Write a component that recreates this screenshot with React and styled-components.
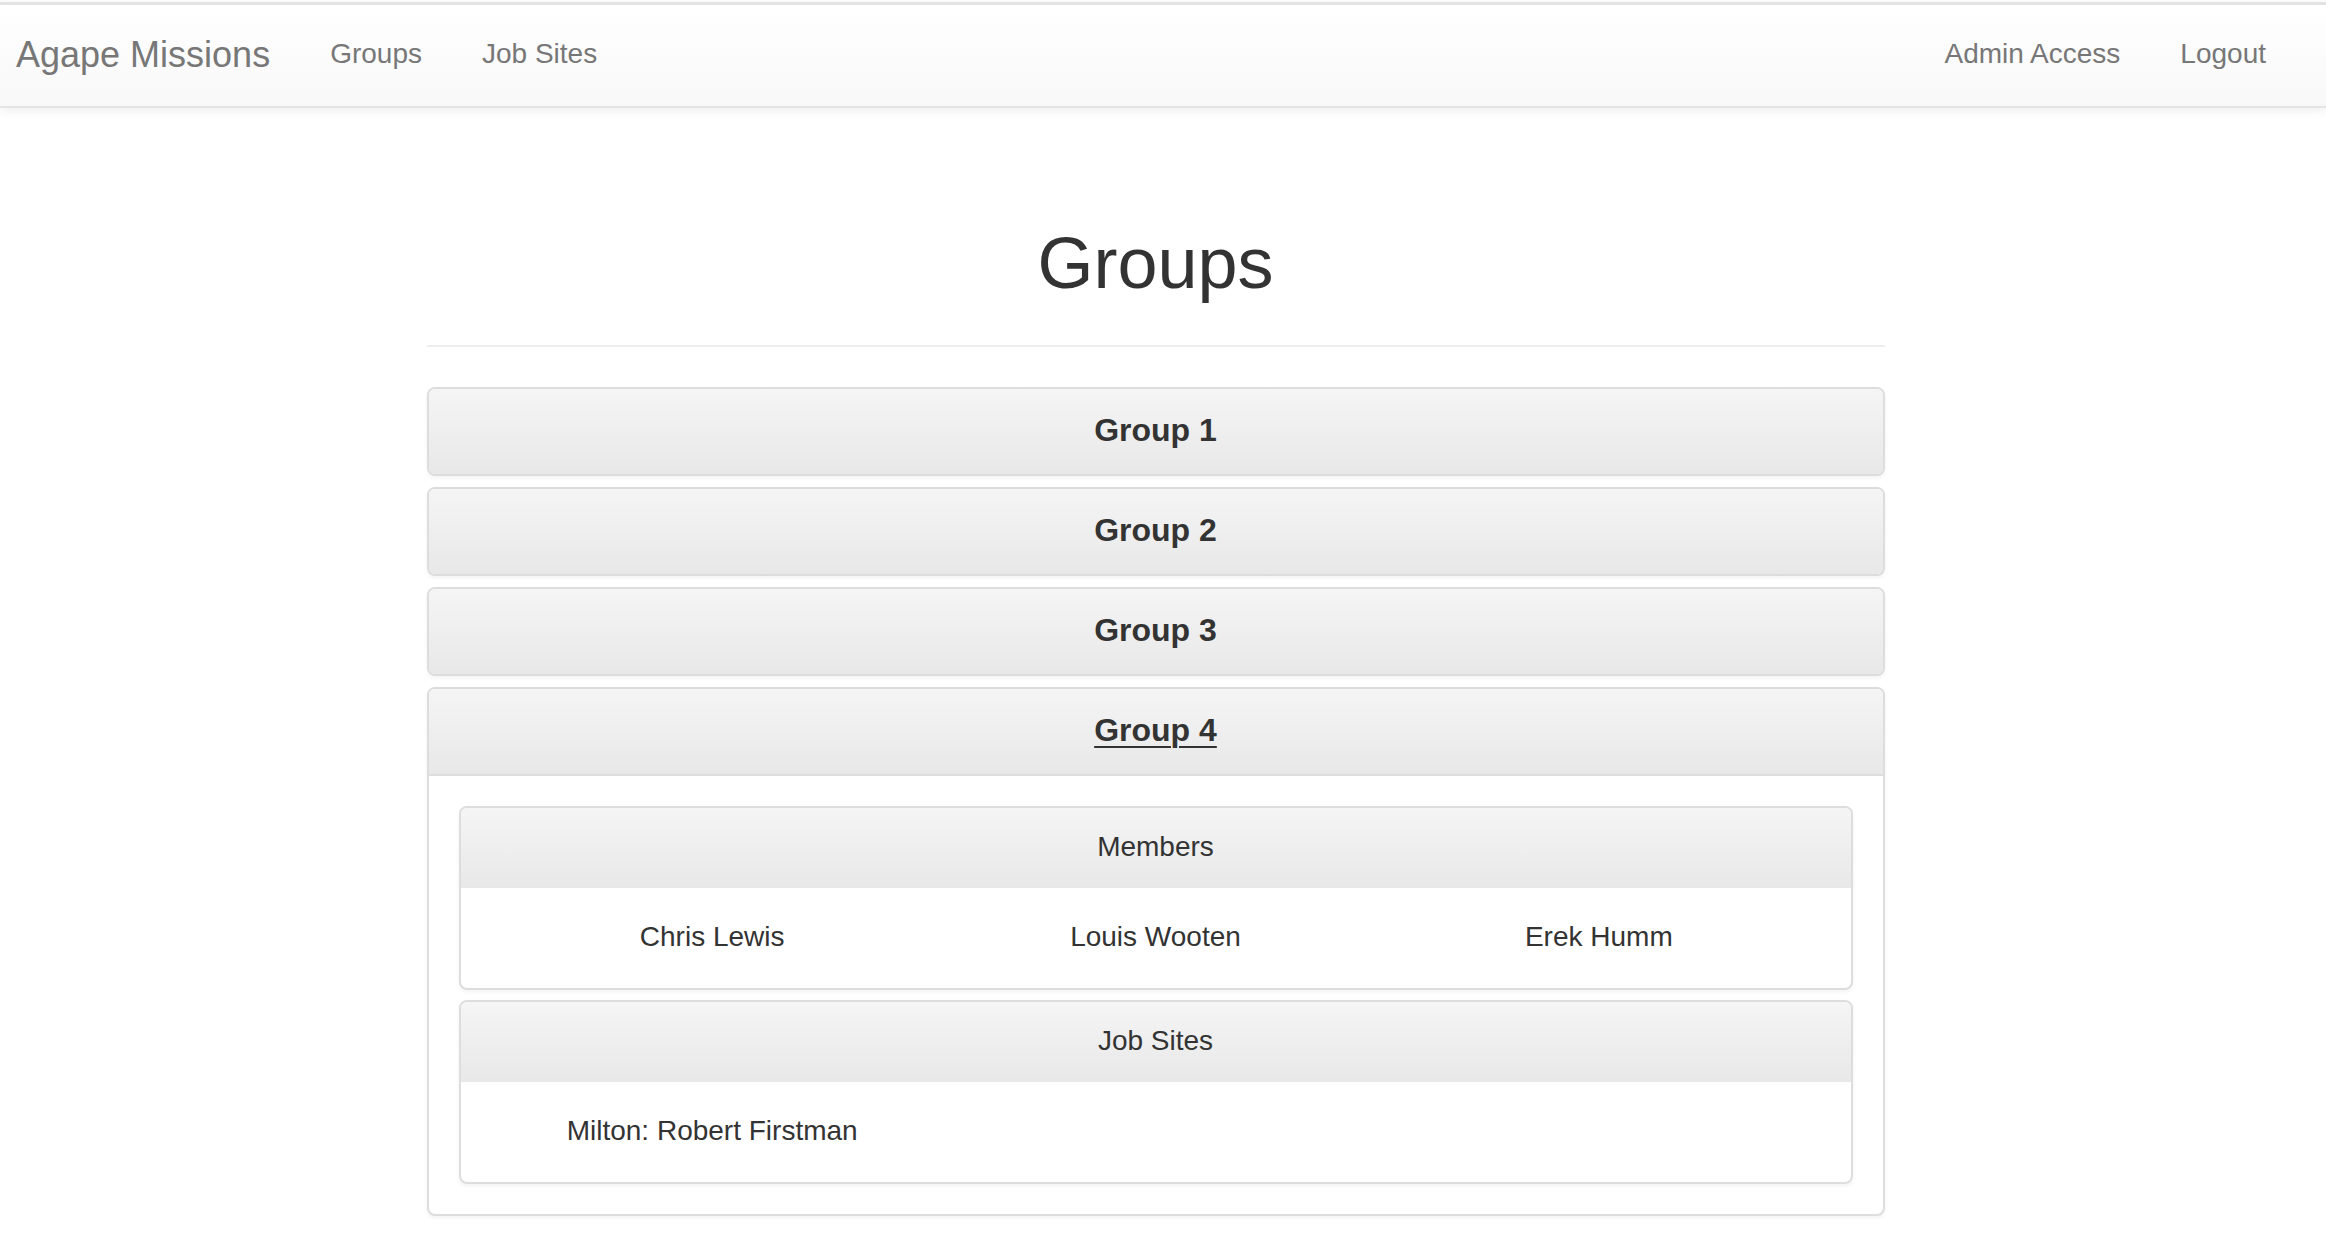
import React from 'react';
import styled, { createGlobalStyle } from 'styled-components';

const GlobalStyle = createGlobalStyle`
  * {
    box-sizing: border-box;
  }

  body {
    margin: 0;
    background: #fff;
    color: #333;
    font-family: "Liberation Sans", Arial, Helvetica, sans-serif;
  }
`;

const Navbar = styled.nav`
  display: flex;
  align-items: flex-start;
  height: 106px;
  margin-top: 2px;
  border-top: 3px solid #e3e3e3;
  border-bottom: 2px solid #e4e4e4;
  background: linear-gradient(to bottom, #fff 0%, #f8f8f8 100%);
  box-shadow: 0 2px 10px rgba(0, 0, 0, 0.075);
`;

const Brand = styled.a`
  padding: 30px 30px 0 16px;
  font-size: 36px;
  line-height: 40px;
  color: #777;
  text-decoration: none;
`;

const NavList = styled.ul`
  display: flex;
  margin: 0;
  padding: 0;
  list-style: none;
  margin-left: ${(p) => (p.$right ? 'auto' : '0')};
  padding-right: ${(p) => (p.$right ? '30px' : '0')};
`;

const NavLink = styled.a`
  display: block;
  padding: 29px 30px 0;
  font-size: 28px;
  line-height: 40px;
  color: #777;
  text-decoration: none;
`;

const Main = styled.main`
  padding-right: 15px;
`;

const Container = styled.div`
  width: 1458px;
  margin: 0 auto;
`;

const PageTitle = styled.h1`
  margin: 115px 0 0;
  padding-bottom: 42px;
  border-bottom: 2px solid #eee;
  font-size: 72px;
  line-height: 80px;
  font-weight: normal;
  text-align: center;
  color: #333;
`;

const PanelGroup = styled.div`
  display: flex;
  flex-direction: column;
  gap: 11px;
  margin-top: 40px;
  padding-bottom: 20px;
`;

const Panel = styled.div`
  border: 2px solid #ddd;
  border-radius: 8px;
  overflow: hidden;
  background: #fff;
  box-shadow: 0 2px 4px rgba(0, 0, 0, 0.05);
`;

const PanelHeading = styled.div`
  padding: 19px 30px 21px;
  text-align: center;
  background: linear-gradient(to bottom, #f5f5f5 0%, #e8e8e8 100%);
  border-bottom: ${(p) => (p.$open ? '2px solid #ddd' : 'none')};
`;

const PanelTitle = styled.h3`
  margin: 0;
  font-size: 32px;
  line-height: 45px;
  font-weight: bold;

  a {
    color: #333;
    text-decoration: ${(p) => (p.$active ? 'underline' : 'none')};
    text-decoration-thickness: 2px;
    text-underline-offset: 5px;
  }
`;

const PanelBody = styled.div`
  display: flex;
  flex-direction: column;
  gap: 10px;
  padding: 30px;
`;

const SubPanel = styled.div`
  border: 2px solid #ddd;
  border-radius: 8px;
  overflow: hidden;
  box-shadow: 0 2px 4px rgba(0, 0, 0, 0.05);
`;

const SubHeading = styled.div`
  padding: 19px 30px 21px;
  font-size: 28px;
  line-height: 40px;
  text-align: center;
  background: linear-gradient(to bottom, #f5f5f5 0%, #e8e8e8 100%);
`;

const SubBody = styled.div`
  display: grid;
  grid-template-columns: repeat(3, 1fr);
  padding: 29px 30px 31px;
  font-size: 28px;
  line-height: 40px;
  text-align: center;
`;

const groups = [
  { id: 1, name: 'Group 1' },
  { id: 2, name: 'Group 2' },
  { id: 3, name: 'Group 3' },
  {
    id: 4,
    name: 'Group 4',
    open: true,
    members: ['Chris Lewis', 'Louis Wooten', 'Erek Humm'],
    sites: ['Milton: Robert Firstman'],
  },
];

const App = () => {
  return (
    <>
      <GlobalStyle />
      <Navbar>
        <Brand href="#">Agape Missions</Brand>
        <NavList>
          <li>
            <NavLink href="#">Groups</NavLink>
          </li>
          <li>
            <NavLink href="#">Job Sites</NavLink>
          </li>
        </NavList>
        <NavList $right>
          <li>
            <NavLink href="#">Admin Access</NavLink>
          </li>
          <li>
            <NavLink href="#">Logout</NavLink>
          </li>
        </NavList>
      </Navbar>

      <Main>
        <Container>
          <PageTitle>Groups</PageTitle>
          <PanelGroup>
            {groups.map((group) => (
              <Panel key={group.id}>
                <PanelHeading $open={group.open}>
                  <PanelTitle $active={group.open}>
                    <a href="#">{group.name}</a>
                  </PanelTitle>
                </PanelHeading>
                {group.open && (
                  <PanelBody>
                    <SubPanel>
                      <SubHeading>Members</SubHeading>
                      <SubBody>
                        {group.members.map((m) => (
                          <div key={m}>{m}</div>
                        ))}
                      </SubBody>
                    </SubPanel>
                    <SubPanel>
                      <SubHeading>Job Sites</SubHeading>
                      <SubBody>
                        {group.sites.map((s) => (
                          <div key={s}>{s}</div>
                        ))}
                      </SubBody>
                    </SubPanel>
                  </PanelBody>
                )}
              </Panel>
            ))}
          </PanelGroup>
        </Container>
      </Main>
    </>
  );
};

export default App;
